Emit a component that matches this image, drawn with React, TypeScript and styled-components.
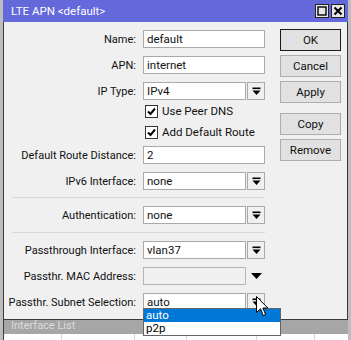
import React from 'react';
import styled, { createGlobalStyle } from 'styled-components';

const GlobalStyle = createGlobalStyle`
	html, body {
		margin: 0;
		padding: 0;
		background: #bdbdbd;
	}
	* {
		box-sizing: border-box;
	}
`;

const Screen = styled.div`
	position: relative;
	width: 351px;
	height: 340px;
	overflow: hidden;
	background: #bdbdbd;
	font-family: Roboto, 'Liberation Sans', Arial, sans-serif;
	font-size: 11px;
	color: #111;
`;

const Window = styled.div`
	margin-left: 3px;
	width: 345px;
	height: 320px;
	background: #f0f0f0;
	border: 1px solid #3a3a3a;
	border-top: none;
	display: flex;
	flex-direction: column;
`;

const TitleBar = styled.div`
	height: 22px;
	margin: 0 -1px;
	background: #6369db;
	display: flex;
	align-items: center;
	padding: 0 3px 0 8px;
`;

const Title = styled.div`
	flex: 1;
	color: #fff;
	font-size: 11.5px;
`;

const TitleButton = styled.div`
	width: 14px;
	height: 14px;
	margin-left: 2px;
	background: #e6e6e6;
	border: 1px solid #222;
	display: flex;
	align-items: center;
	justify-content: center;
`;

const Body = styled.div`
	display: flex;
	padding-top: 7px;
`;

const Form = styled.div`
	width: 261px;
	padding-top: 1px;
	display: flex;
	flex-direction: column;
`;

const Row = styled.div<{ $mt: number; $h?: number }>`
	display: grid;
	grid-template-columns: 132px 122px;
	column-gap: 7px;
	align-items: center;
	height: ${(p) => p.$h ?? 18}px;
	margin-top: ${(p) => p.$mt}px;
`;

const Label = styled.div`
	text-align: right;
	white-space: nowrap;
`;

const Field = styled.div`
	display: flex;
	gap: 1px;
	height: 18px;
`;

const Input = styled.div<{ $disabled?: boolean }>`
	flex: 1;
	height: 18px;
	background: ${(p) => (p.$disabled ? '#f0f0f0' : '#fff')};
	border: 1px solid ${(p) => (p.$disabled ? '#b4b4b4' : '#a9a9a9')};
	padding-left: 3px;
	line-height: 16px;
	font-size: 11.5px;
	white-space: nowrap;
	overflow: hidden;
`;

const DropButton = styled.div<{ $plain?: boolean }>`
	width: 18px;
	height: 18px;
	border: 1px solid ${(p) => (p.$plain ? 'transparent' : '#a9a9a9')};
	background: #f0f0f0;
	display: flex;
	align-items: center;
	justify-content: center;
`;

const Check = styled.label`
	grid-column: 2;
	display: flex;
	align-items: center;
	gap: 4px;
	margin-left: 2px;
	white-space: nowrap;
	font-size: 11.5px;
`;

const Box = styled.span`
	width: 13px;
	height: 13px;
	border: 1px solid #333;
	background: #fff;
	display: flex;
	align-items: center;
	justify-content: center;
`;

const Separator = styled.div<{ $mt: number }>`
	margin: ${(p) => p.$mt}px 0 0 8px;
	width: 253px;
	height: 1px;
	background: #d7d7d7;
`;

const Buttons = styled.div`
	margin-left: 15px;
	display: flex;
	flex-direction: column;
	gap: 4px;
`;

const Button = styled.div<{ $focused?: boolean; $gapBefore?: boolean }>`
	width: 61px;
	height: 22px;
	margin-top: ${(p) => (p.$gapBefore ? 6 : 0)}px;
	background: #e1e1e1;
	border: 1px solid ${(p) => (p.$focused ? '#1b1b1b' : '#adadad')};
	display: flex;
	align-items: center;
	justify-content: center;
	font-size: 11.5px;
`;

const BackWindow = styled.div`
	margin-left: 3px;
	width: 345px;
	border-left: 1px solid #3a3a3a;
`;

const BackTitle = styled.div`
	height: 14px;
	background: #a6a6a6;
	color: #dcdcdc;
	padding-left: 7px;
	line-height: 12px;
`;

const HeaderRow = styled.div`
	height: 8px;
	background: #fff;
	display: flex;
`;

const HeaderCell = styled.div<{ $w: number }>`
	width: ${(p) => p.$w}px;
	border-right: 1px solid #d5d5d5;
`;

const DropList = styled.div`
	position: absolute;
	left: 143px;
	top: 308px;
	width: 138px;
	border: 1px solid #646464;
	background: #fff;
	font-size: 11.5px;
`;

const DropItem = styled.div<{ $active?: boolean }>`
	height: 13px;
	line-height: 13px;
	padding-left: 2px;
	background: ${(p) => (p.$active ? '#0078d7' : '#fff')};
	color: ${(p) => (p.$active ? '#fff' : '#000')};
`;

const Cursor = styled.svg`
	position: absolute;
	left: 256px;
	top: 296px;
`;

const DropIcon = () => (
	<svg width="9" height="9" viewBox="0 0 9 9">
		<rect x="0.5" y="0.5" width="8" height="1.6" fill="#000" />
		<polygon points="0.5,3.5 8.5,3.5 4.5,8" fill="#000" />
	</svg>
);

const ArrowIcon = () => (
	<svg width="11" height="6" viewBox="0 0 11 6">
		<polygon points="0,0 11,0 5.5,6" fill="#000" />
	</svg>
);

const CheckMark = () => (
	<svg width="9" height="9" viewBox="0 0 9 9">
		<polyline points="1,4.5 3.5,7 8,1.5" fill="none" stroke="#000" strokeWidth="2" />
	</svg>
);

const TextRow = ({ label, value, mt }: { label: string; value: string; mt: number }) => (
	<Row $mt={mt}>
		<Label>{label}</Label>
		<Field>
			<Input>{value}</Input>
		</Field>
	</Row>
);

const SelectRow = ({ label, value, mt, plain }: { label: string; value: string; mt: number; plain?: boolean }) => (
	<Row $mt={mt}>
		<Label>{label}</Label>
		<Field>
			<Input $disabled={plain}>{value}</Input>
			<DropButton $plain={plain}>{plain ? <ArrowIcon /> : <DropIcon />}</DropButton>
		</Field>
	</Row>
);

const CheckRow = ({ label, mt }: { label: string; mt: number }) => (
	<Row $mt={mt} $h={14}>
		<Check>
			<Box>
				<CheckMark />
			</Box>
			{label}
		</Check>
	</Row>
);

export default function App() {
	return (
		<Screen>
			<GlobalStyle />
			<Window>
				<TitleBar>
					<Title>LTE APN &lt;default&gt;</Title>
					<TitleButton>
						<svg width="10" height="10" viewBox="0 0 10 10">
							<rect x="1" y="1" width="8" height="8" fill="none" stroke="#000" strokeWidth="1.4" />
						</svg>
					</TitleButton>
					<TitleButton>
						<svg width="10" height="10" viewBox="0 0 10 10">
							<path d="M1.5 1.5 L8.5 8.5 M8.5 1.5 L1.5 8.5" stroke="#000" strokeWidth="2" />
						</svg>
					</TitleButton>
				</TitleBar>
				<Body>
					<Form>
						<TextRow label="Name:" value="default" mt={0} />
						<TextRow label="APN:" value="internet" mt={8} />
						<SelectRow label="IP Type:" value="IPv4" mt={8} />
						<CheckRow label="Use Peer DNS" mt={4} />
						<CheckRow label="Add Default Route" mt={7} />
						<TextRow label="Default Route Distance:" value="2" mt={7} />
						<SelectRow label="IPv6 Interface:" value="none" mt={8} />
						<Separator $mt={7} />
						<SelectRow label="Authentication:" value="none" mt={8} />
						<Separator $mt={8} />
						<SelectRow label="Passthrough Interface:" value="vlan37" mt={8} />
						<SelectRow label="Passthr. MAC Address:" value="" mt={8} plain />
						<SelectRow label="Passthr. Subnet Selection:" value="auto" mt={8} />
					</Form>
					<Buttons>
						<Button $focused>OK</Button>
						<Button>Cancel</Button>
						<Button>Apply</Button>
						<Button $gapBefore>Copy</Button>
						<Button>Remove</Button>
					</Buttons>
				</Body>
			</Window>
			<BackWindow>
				<BackTitle>Interface List</BackTitle>
				<HeaderRow>
					<HeaderCell $w={58} />
					<HeaderCell $w={73} />
					<HeaderCell $w={52} />
					<HeaderCell $w={70} />
					<HeaderCell $w={58} />
				</HeaderRow>
			</BackWindow>
			<DropList>
				<DropItem $active>auto</DropItem>
				<DropItem>p2p</DropItem>
			</DropList>
			<Cursor width="13" height="21" viewBox="0 0 13 21">
				<path d="M0.5 0.5 L0.5 16.5 L4.5 12.8 L7.2 19.5 L9.6 18.5 L6.9 12 L11.8 12 Z" fill="#fff" stroke="#000" strokeWidth="1" strokeLinejoin="round" />
			</Cursor>
		</Screen>
	);
}
